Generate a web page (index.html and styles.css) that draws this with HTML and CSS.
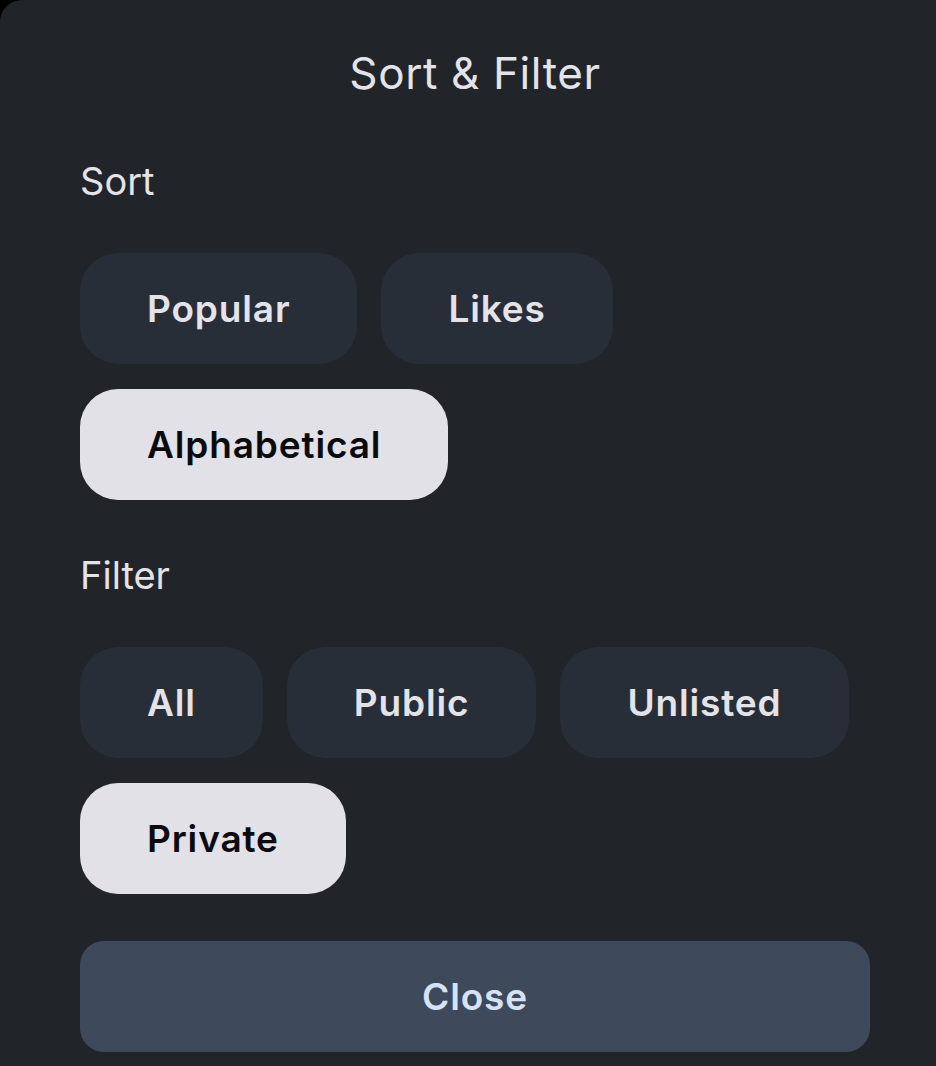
FILE: index.html
```html
<!DOCTYPE html>
<html lang="en">
<head>
<meta charset="utf-8">
<title>Sort &amp; Filter</title>
<link rel="stylesheet" href="styles.css">
</head>
<body>
<div class="sheet">
  <h1 class="title">Sort &amp; Filter</h1>
  <div class="section-label label-sort">Sort</div>
  <div class="chips">
    <button class="chip">Popular</button>
    <button class="chip">Likes</button>
    <button class="chip selected">Alphabetical</button>
  </div>
  <div class="section-label label-filter">Filter</div>
  <div class="chips">
    <button class="chip">All</button>
    <button class="chip">Public</button>
    <button class="chip">Unlisted</button>
    <button class="chip selected">Private</button>
  </div>
  <button class="close-btn">Close</button>
</div>
</body>
</html>
```
FILE: styles.css
```css
html, body {
  margin: 0;
  padding: 0;
  background: #000;
}
.sheet {
  box-sizing: border-box;
  min-height: 1066px;
  background: #212429;
  border-top-left-radius: 22px;
  padding: 47px 66px 0 80px;
  font-family: Inter, "Noto Sans", sans-serif;
  display: flex;
  flex-direction: column;
}
.title {
  margin: 0;
  font-size: 44px;
  line-height: 52px;
  font-weight: 400;
  letter-spacing: 0.6px;
  color: #e4e3e9;
  text-align: center;
}
.section-label {
  font-size: 38px;
  line-height: 46px;
  font-weight: 400;
  color: #e4e3e9;
}
.label-sort { margin-top: 59px; }
.label-filter { margin-top: 52px; }
.chips {
  margin-top: 49px;
  display: flex;
  flex-wrap: wrap;
  column-gap: 24px;
  row-gap: 25px;
  max-width: 790px;
}
.chip {
  height: 111px;
  padding: 0 67px;
  border: none;
  border-radius: 38px;
  background: #282e37;
  color: #e4e3e9;
  font-family: Inter, "Noto Sans", sans-serif;
  font-size: 37px;
  font-weight: 600;
  letter-spacing: 0.85px;
}
.chip.selected {
  background: #e2e1e8;
  color: #0b0b0d;
}
.close-btn {
  margin-top: 47px;
  width: 790px;
  height: 111px;
  border: none;
  border-radius: 24px;
  background: #3e4a5b;
  color: #d6e3f7;
  font-family: Inter, "Noto Sans", sans-serif;
  font-size: 37px;
  font-weight: 600;
  letter-spacing: 0.85px;
}
```
